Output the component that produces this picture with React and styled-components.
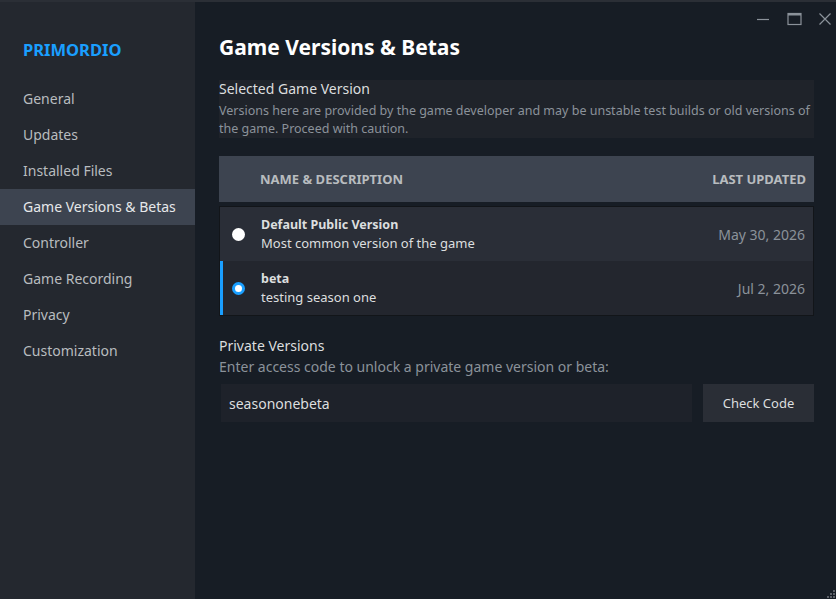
import React, { useState } from 'react';
import styled, { createGlobalStyle } from 'styled-components';

const GlobalStyle = createGlobalStyle`
  html, body {
    margin: 0;
    padding: 0;
    background: #171d25;
  }
  body {
    font-family: "Noto Sans", "Liberation Sans", sans-serif;
    -webkit-font-smoothing: antialiased;
  }
`;

const Window = styled.div`
  display: flex;
  width: 836px;
  height: 599px;
  overflow: hidden;
  background: #171d25;
  border-top: 2px solid #2b2f36;
  box-sizing: border-box;
`;

const Sidebar = styled.nav`
  width: 195px;
  flex-shrink: 0;
  background: #24282f;
  padding-top: 37px;
  box-sizing: border-box;
`;

const GameTitle = styled.div`
  color: #1a9fff;
  font-weight: 700;
  font-size: 16.5px;
  padding: 0 23px;
  height: 22px;
  line-height: 22px;
  margin-bottom: 20px;
`;

const NavItem = styled.div`
  height: 36px;
  line-height: 36px;
  padding: 0 0 0 23px;
  font-size: 14px;
  white-space: nowrap;
  color: ${(p) => (p.$active ? '#e6e8ea' : '#b8bcbf')};
  background: ${(p) => (p.$active ? '#3d4450' : 'transparent')};
  cursor: pointer;
`;

const Main = styled.main`
  flex: 1;
  position: relative;
  padding: 29px 22px 0 24px;
  box-sizing: border-box;
`;

const WindowControls = styled.div`
  position: absolute;
  top: 6px;
  right: -1px;
  display: flex;
  gap: 7px;
`;

const CtrlButton = styled.button`
  width: 24px;
  height: 22px;
  padding: 0;
  border: none;
  background: none;
  display: flex;
  align-items: center;
  justify-content: center;
`;

const PageTitle = styled.h1`
  margin: 0 0 17px;
  font-size: 21px;
  font-weight: 700;
  color: #ffffff;
  line-height: 32px;
`;

const InfoBox = styled.section`
  background: #1f232a;
  margin-bottom: 18px;
`;

const SectionTitle = styled.div`
  font-size: 14px;
  color: #dcdedf;
  line-height: 18px;
  padding-bottom: 4px;
`;

const SectionDesc = styled.div`
  font-size: ${(p) => (p.$large ? '14px' : '12.5px')};
  color: #8b929a;
  line-height: 18px;
`;

const TableHead = styled.div`
  display: flex;
  justify-content: space-between;
  align-items: center;
  height: 46px;
  background: #3d4450;
  padding: 0 8px 0 41px;
  margin-bottom: 4px;
  font-size: 13px;
  font-weight: 700;
  color: #b8bcbf;
  text-transform: uppercase;
`;

const Rows = styled.div`
  border: 1px solid #121519;
`;

const Row = styled.label`
  display: flex;
  align-items: center;
  height: 54px;
  background: ${(p) => (p.$alt ? '#23262e' : '#2a2e37')};
  border-left: 3px solid ${(p) => (p.$selected ? '#1a9fff' : 'transparent')};
  padding: 0 8px 0 9px;
  cursor: pointer;
`;

const Radio = styled.span`
  width: 13px;
  height: 13px;
  border-radius: 50%;
  flex-shrink: 0;
  box-sizing: border-box;
  background: #ffffff;
  border: ${(p) => (p.$checked ? '3.5px solid #1a9fff' : 'none')};
  margin-right: 16px;
`;

const RowText = styled.div`
  flex: 1;
`;

const RowName = styled.div`
  font-size: 12.5px;
  font-weight: 700;
  color: #dcdedf;
  line-height: 18px;
`;

const RowDesc = styled.div`
  font-size: 13px;
  color: #dcdedf;
  line-height: 19px;
`;

const RowDate = styled.div`
  font-size: 14px;
  color: #8b929a;
`;

const PrivateTitle = styled(SectionTitle)`
  margin-top: 21px;
  padding-bottom: 3px;
`;

const CodeRow = styled.div`
  display: flex;
  gap: 11px;
  margin-top: 8px;
  padding-left: 2px;
`;

const CodeInput = styled.input`
  flex: 1;
  height: 38px;
  box-sizing: border-box;
  background: #1e222a;
  border: none;
  outline: none;
  color: #dcdedf;
  font-family: "Noto Sans", "Liberation Sans", sans-serif;
  font-size: 14px;
  padding: 0 8px;
`;

const CheckButton = styled.button`
  width: 111px;
  height: 38px;
  background: #2a2e36;
  border: none;
  color: #dcdedf;
  font-family: "Noto Sans", "Liberation Sans", sans-serif;
  font-size: 13px;
  cursor: pointer;
`;

const ResizeGrip = styled.svg`
  position: absolute;
  right: 0;
  bottom: 0;
`;

const nav = [
  'General',
  'Updates',
  'Installed Files',
  'Game Versions & Betas',
  'Controller',
  'Game Recording',
  'Privacy',
  'Customization',
];

const versions = [
  { id: 'public', name: 'Default Public Version', desc: 'Most common version of the game', date: 'May 30, 2026' },
  { id: 'beta', name: 'beta', desc: 'testing season one', date: 'Jul 2, 2026' },
];

export default function App() {
  const [selected, setSelected] = useState('beta');
  const [code, setCode] = useState('seasononebeta');

  return (
    <>
      <GlobalStyle />
      <Window>
        <Sidebar>
          <GameTitle>PRIMORDIO</GameTitle>
          {nav.map((n) => (
            <NavItem key={n} $active={n === 'Game Versions & Betas'}>
              {n}
            </NavItem>
          ))}
        </Sidebar>
        <Main>
          <WindowControls>
            <CtrlButton aria-label="Minimize">
              <svg width="14" height="14" viewBox="0 0 14 14">
                <path d="M1 7.5h12" stroke="#8b929a" strokeWidth="1.2" />
              </svg>
            </CtrlButton>
            <CtrlButton aria-label="Maximize">
              <svg width="15" height="14" viewBox="0 0 15 14">
                <rect x="1" y="1.5" width="13" height="11" fill="none" stroke="#8b929a" strokeWidth="1.2" />
                <path d="M1 2.5h13" stroke="#8b929a" strokeWidth="2" />
              </svg>
            </CtrlButton>
            <CtrlButton aria-label="Close">
              <svg width="14" height="14" viewBox="0 0 14 14">
                <path d="M1.5 1.5l11 11M12.5 1.5l-11 11" stroke="#8b929a" strokeWidth="1.2" />
              </svg>
            </CtrlButton>
          </WindowControls>

          <PageTitle>Game Versions &amp; Betas</PageTitle>

          <InfoBox>
            <SectionTitle>Selected Game Version</SectionTitle>
            <SectionDesc>
              Versions here are provided by the game developer and may be unstable test builds or old versions
              of the game. Proceed with caution.
            </SectionDesc>
          </InfoBox>

          <TableHead>
            <span>Name &amp; Description</span>
            <span>Last Updated</span>
          </TableHead>
          <Rows>
            {versions.map((v, i) => (
              <Row key={v.id} $alt={i === 1} $selected={selected === v.id} onClick={() => setSelected(v.id)}>
                <Radio $checked={selected === v.id} />
                <RowText>
                  <RowName>{v.name}</RowName>
                  <RowDesc>{v.desc}</RowDesc>
                </RowText>
                <RowDate>{v.date}</RowDate>
              </Row>
            ))}
          </Rows>

          <PrivateTitle>Private Versions</PrivateTitle>
          <SectionDesc $large>Enter access code to unlock a private game version or beta:</SectionDesc>
          <CodeRow>
            <CodeInput value={code} onChange={(e) => setCode(e.target.value)} />
            <CheckButton>Check Code</CheckButton>
          </CodeRow>

          <ResizeGrip width="10" height="10" viewBox="0 0 10 10">
            <rect x="7" y="1" width="2" height="2" fill="#5c6068" />
            <rect x="4" y="4" width="2" height="2" fill="#5c6068" />
            <rect x="7" y="4" width="2" height="2" fill="#5c6068" />
            <rect x="1" y="7" width="2" height="2" fill="#5c6068" />
            <rect x="4" y="7" width="2" height="2" fill="#5c6068" />
            <rect x="7" y="7" width="2" height="2" fill="#5c6068" />
          </ResizeGrip>
        </Main>
      </Window>
    </>
  );
}
